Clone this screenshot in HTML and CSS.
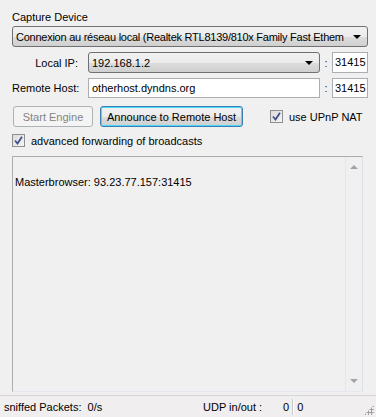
FILE: index.html
```html
<!DOCTYPE html>
<html lang="en">
<head>
  <meta charset="UTF-8">
  <title>Sniffer</title>
  <link rel="stylesheet" href="styles.css">
</head>
<body>
  <div class="window">
    <div class="content">
      <div class="caption">Capture Device</div>
      <div class="combo combo-wide">
        <span class="combo-text">Connexion au réseau local (Realtek RTL8139/810x Family Fast Ethem</span>
        <span class="arrow"></span>
      </div>

      <div class="row row-ip">
        <label class="field-label">Local IP:</label>
        <div class="combo combo-ip">
          <span class="combo-text">192.168.1.2</span>
          <span class="arrow"></span>
        </div>
        <span class="colon">:</span>
        <div class="box port">31415</div>
      </div>

      <div class="row row-host">
        <label class="field-label">Remote Host:</label>
        <div class="box host">otherhost.dyndns.org</div>
        <span class="colon">:</span>
        <div class="box port">31415</div>
      </div>

      <div class="row row-buttons">
        <button class="btn btn-start" disabled>Start Engine</button>
        <button class="btn btn-announce">Announce to Remote Host</button>
        <label class="check check-upnp">
          <span class="tick">
            <svg width="9" height="9" viewBox="0 0 9 9"><path d="M1 4.5 L3.5 7.5 L8 0.8" fill="none" stroke="#3d4f8c" stroke-width="1.8"/></svg>
          </span>
          use UPnP NAT
        </label>
      </div>

      <label class="check check-adv">
        <span class="tick">
          <svg width="9" height="9" viewBox="0 0 9 9"><path d="M1 4.5 L3.5 7.5 L8 0.8" fill="none" stroke="#3d4f8c" stroke-width="1.8"/></svg>
        </span>
        advanced forwarding of broadcasts
      </label>

      <div class="log">
        <div class="log-text">Masterbrowser: 93.23.77.157:31415</div>
        <div class="scrollbar">
          <span class="sb-up"></span>
          <span class="sb-down"></span>
        </div>
      </div>
    </div>

    <div class="status">
      <span class="status-left">sniffed Packets:&nbsp; 0/s</span>
      <span class="status-udp">UDP in/out :</span>
      <span class="status-in">0</span>
      <span class="status-out">0</span>
      <span class="grip"></span>
    </div>
  </div>
</body>
</html>
```

FILE: styles.css
```css
body {
  margin: 0;
  padding: 0;
  background-color: #f0f0f0;
  font-family: 'Liberation Sans', Arial, sans-serif;
  font-size: 11px;
  color: #000;
}
.window {
  width: 376px;
  height: 417px;
  display: flex;
  flex-direction: column;
  overflow: hidden;
}
.content {
  flex: 1;
  padding: 11px 0 0 12px;
}
.caption {
  height: 13px;
  line-height: 13px;
  margin-bottom: 2px;
}
.combo {
  height: 21px;
  box-sizing: border-box;
  border: 1px solid #707070;
  border-radius: 3px;
  background: linear-gradient(#f2f2f2 0%, #ebebeb 50%, #dddddd 51%, #cfcfcf 100%);
  display: flex;
  align-items: center;
  padding-left: 3px;
  white-space: nowrap;
  overflow: hidden;
}
.combo-wide {
  width: 356px;
  margin-bottom: 5px;
}
.combo-wide .combo-text {
  letter-spacing: -0.25px;
}
.combo-text {
  flex: 1;
  overflow: hidden;
}
.arrow {
  width: 0;
  height: 0;
  border-left: 4px solid transparent;
  border-right: 4px solid transparent;
  border-top: 4px solid #000;
  margin: 1px 6px 0 4px;
}
.row {
  display: flex;
  align-items: center;
}
.row-ip {
  height: 21px;
  margin-bottom: 5px;
}
.row-host {
  height: 20px;
  margin-bottom: 8px;
}
.field-label {
  width: 66px;
  text-align: right;
  margin-right: 10px;
  white-space: nowrap;
}
.combo-ip {
  width: 232px;
}
.colon {
  width: 12px;
  text-align: center;
  color: #333;
}
.box {
  height: 20px;
  box-sizing: border-box;
  border: 1px solid #abadb3;
  border-top-color: #abadb3;
  background: #fff;
  padding-left: 3px;
  line-height: 18px;
  white-space: nowrap;
}
.row-ip .box {
  height: 21px;
  line-height: 19px;
}
.host {
  width: 232px;
}
.port {
  width: 36px;
  padding-left: 2px;
}
.row-buttons {
  height: 21px;
  margin-bottom: 7px;
}
.btn {
  height: 21px;
  box-sizing: border-box;
  font-family: 'Liberation Sans', Arial, sans-serif;
  font-size: 11px;
  border-radius: 3px;
  padding: 0;
  margin: 0;
}
.btn-start {
  width: 80px;
  margin-left: 1px;
  border: 1px solid #adb2b5;
  background: #f4f4f4;
  color: #838383;
}
.btn-announce {
  width: 143px;
  margin-left: 7px;
  border: 1px solid #3c7fb1;
  color: #000;
  background: linear-gradient(#f2f2f2 0%, #ebebeb 50%, #dddddd 51%, #cfcfcf 100%);
  box-shadow: inset 0 0 0 1px #48d8fb;
}
.check {
  display: flex;
  align-items: center;
  height: 13px;
}
.tick {
  width: 13px;
  height: 13px;
  box-sizing: border-box;
  border: 1px solid #8e8f8f;
  background: linear-gradient(135deg, #dcdcdc, #f4f4f4);
  display: flex;
  align-items: center;
  justify-content: center;
  margin-right: 6px;
}
.check-upnp {
  margin-left: 27px;
}
.check-adv {
  margin-bottom: 9px;
}
.log {
  width: 351px;
  height: 236px;
  box-sizing: border-box;
  border: 1px solid #abadb3;
  border-right-color: #dbdfe6;
  border-bottom-color: #e3e9ef;
  display: flex;
}
.log-text {
  flex: 1;
  padding: 19px 0 0 2px;
}
.scrollbar {
  width: 16px;
  border-left: 1px solid #e6e6e6;
  background: #f0f0f0;
  display: flex;
  flex-direction: column;
  justify-content: space-between;
  align-items: center;
  padding: 8px 0;
}
.sb-up {
  width: 0;
  height: 0;
  border-left: 4px solid transparent;
  border-right: 4px solid transparent;
  border-bottom: 4px solid #a3a3a3;
}
.sb-down {
  width: 0;
  height: 0;
  border-left: 4px solid transparent;
  border-right: 4px solid transparent;
  border-top: 4px solid #a3a3a3;
}
.status {
  height: 22px;
  box-sizing: border-box;
  border-top: 1px solid #d7d7d7;
  background: #f0eeee;
  display: flex;
  align-items: center;
  position: relative;
  padding-left: 4px;
}
.status-left {
  width: 199px;
}
.status-udp {
  width: 80px;
}
.status-in {
  padding-right: 3px;
  border-right: 1px solid #c8c8c8;
  box-shadow: 1px 0 0 #fff;
  height: 16px;
  line-height: 16px;
}
.status-out {
  padding-left: 4px;
}
.grip {
  position: absolute;
  right: 2px;
  bottom: 2px;
  width: 10px;
  height: 10px;
  background:
    radial-gradient(circle, #a0a0a0 1px, transparent 1.2px) 0 0 / 3px 3px;
  clip-path: polygon(100% 0, 100% 100%, 0 100%);
}
```
